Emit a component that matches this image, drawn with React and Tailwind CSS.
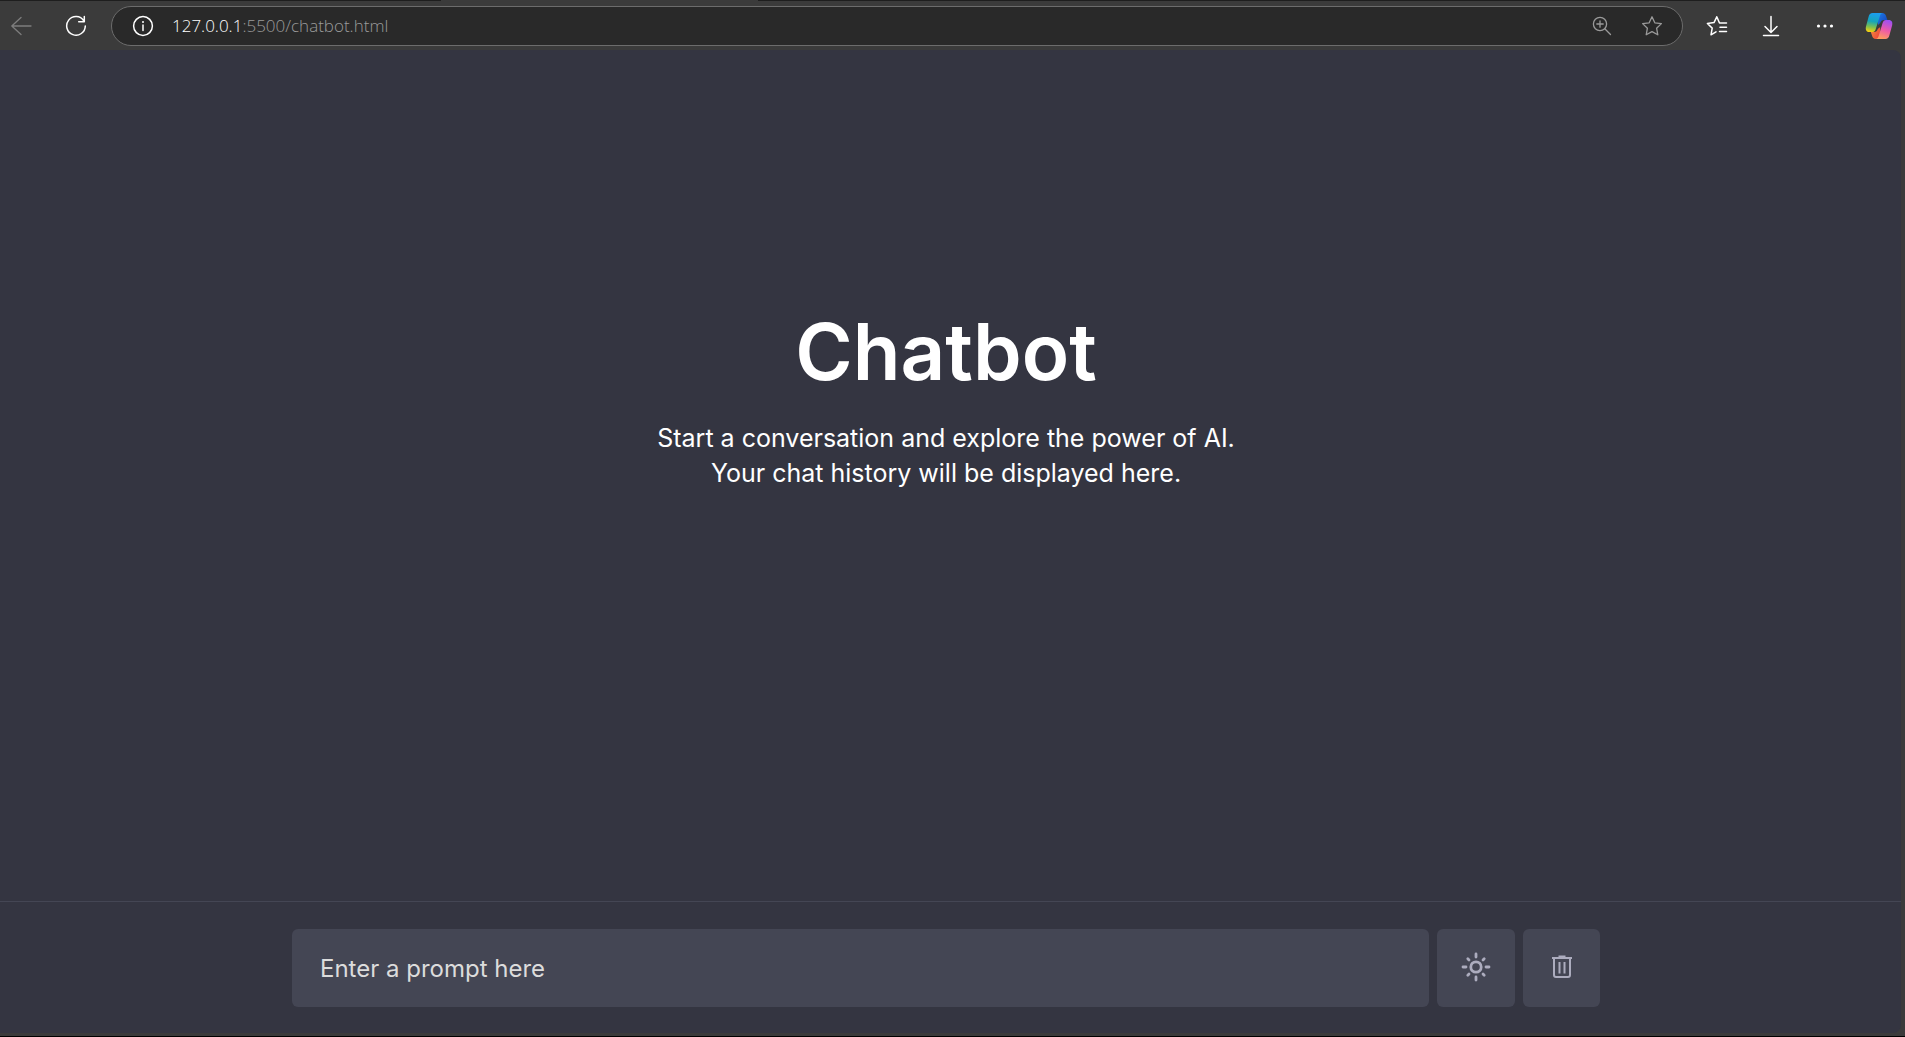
const iconProps = {
  fill: "none",
  stroke: "currentColor",
  strokeLinecap: "round",
  strokeLinejoin: "round",
  "aria-hidden": true,
};

function BackIcon() {
  return (
    <svg {...iconProps} width="22" height="20" viewBox="0 0 22 20" strokeWidth="1.3">
      <path d="M20 10H.8M10 1.500.8 10l9.200 8.500" />
    </svg>
  );
}

function ReloadIcon() {
  return (
    <svg {...iconProps} width="22" height="22" viewBox="0 0 22 22" strokeWidth="1.5">
      <path d="M18.8 5.8A9.3 9.3 0 1 0 20.3 11M19.3 1.5v5.3h-5.6" />
    </svg>
  );
}

function InfoIcon() {
  return (
    <svg {...iconProps} width="22" height="22" viewBox="0 0 22 22" strokeWidth="1.5">
      <circle cx="11" cy="11" r="9.4" />
      <path d="M11 10v5.5" />
      <circle cx="11" cy="7" r="1" fill="currentColor" stroke="none" />
    </svg>
  );
}

function ZoomInIcon() {
  return (
    <svg {...iconProps} width="20" height="20" viewBox="0 0 20 20" strokeWidth="1.3">
      <circle cx="8" cy="8" r="6.6" />
      <path d="M12.8 12.8 18.5 18.5M8 4.8v6.4M4.8 8h6.4" />
    </svg>
  );
}

function StarIcon() {
  return (
    <svg {...iconProps} width="22" height="22" viewBox="0 0 22 22" strokeWidth="1.3">
      <path d="m11 1.8 2.8 6 6.6.8-4.8 4.6 1.2 6.6L11 16.6l-5.8 3.2 1.2-6.6-4.8-4.6 6.6-.8z" />
    </svg>
  );
}

function FavoritesIcon() {
  return (
    <svg {...iconProps} width="22" height="22" viewBox="0 0 22 22" strokeWidth="1.5">
      <path d="M20.500 8H13.500L10.800 1.800 8 7.600l-6.600.9 4.800 4.600L5 19.800l5-2.900M14 12.200h6.500M13.500 16.400h7" />
    </svg>
  );
}

function DownloadIcon() {
  return (
    <svg {...iconProps} width="18" height="22" viewBox="0 0 18 22" strokeWidth="1.5">
      <path d="M9 1.500v15.500M3 11.500l6 6 6-6M1.500 20.500h15" />
    </svg>
  );
}

function MoreIcon() {
  return (
    <svg width="18" height="6" viewBox="0 0 18 6" fill="currentColor" aria-hidden="true">
      <circle cx="2.500" cy="3" r="1.600" />
      <circle cx="9" cy="3" r="1.600" />
      <circle cx="15.500" cy="3" r="1.600" />
    </svg>
  );
}

function CopilotIcon() {
  return (
    <svg width="28" height="28" viewBox="0 0 28 28" aria-hidden="true">
      <defs>
        <linearGradient id="cool" x1="0.5" y1="0" x2="0.35" y2="1">
          <stop offset="0" stopColor="#1b9df0" />
          <stop offset="0.45" stopColor="#16a5b8" />
          <stop offset="0.75" stopColor="#7fc04f" />
          <stop offset="1" stopColor="#f5d010" />
        </linearGradient>
        <linearGradient id="warm" x1="0.6" y1="0" x2="0.3" y2="1">
          <stop offset="0" stopColor="#a050f0" />
          <stop offset="0.5" stopColor="#ee5aa8" />
          <stop offset="1" stopColor="#ffa05a" />
        </linearGradient>
        <linearGradient id="fold" x1="0" y1="0" x2="1" y2="1">
          <stop offset="0" stopColor="#1d7be8" />
          <stop offset="1" stopColor="#1540b8" />
        </linearGradient>
        <linearGradient id="ember" x1="0" y1="0" x2="1" y2="0.6">
          <stop offset="0" stopColor="#f5903a" />
          <stop offset="1" stopColor="#ee4a3c" />
        </linearGradient>
      </defs>
      <path d="M13 1h4c2.5 0 3.6 1.3 4.2 3.4L22.4 8H19c-2.2 0-3.2 1.2-3.8 3L13 13z" fill="url(#fold)" />
      <path d="M15 27h-4c-2.5 0-3.4-1.3-4-3.4L5.8 20H9c2.2 0 3.2-1.2 3.8-3l2.4-2z" fill="url(#ember)" />
      <path d="M7.5 1H18c-2 0-2.7 1.4-3.3 3.4l-4.1 13C10 19.2 8.8 20 7 20H4.5C1.4 20 .2 17.8 1 14.4L3.6 4.8C4.3 2.2 5.4 1 7.5 1z" fill="url(#cool)" />
      <path d="M20.5 27H10.5c2 0 2.7-1.4 3.3-3.4l3.8-12.7C18.2 9 19.3 8 21 8h2.7c3.1 0 4.2 2.2 3.4 5.6l-2.7 9.6c-.7 2.6-1.8 3.8-3.9 3.8z" fill="url(#warm)" />
    </svg>
  );
}

function SunIcon() {
  return (
    <svg {...iconProps} width="30" height="30" viewBox="0 0 30 30" strokeWidth="2.8">
      <circle cx="15" cy="15" r="5.2" />
      <path d="M15 2v3M15 25v3M2 15h3M25 15h3M6.800 6.800l1.200 1.200M22 22l1.200 1.200M6.800 23.200 8 22M22 8l1.200-1.200" />
    </svg>
  );
}

function TrashIcon() {
  return (
    <svg width="30" height="30" viewBox="0 0 30 30" fill="none" stroke="currentColor" strokeWidth="2" aria-hidden="true">
      <path d="M5 6h20M11.500 4.500h7" />
      <path d="M7 6v17q0 2 2 2h12q2 0 2-2V6M12.500 10v11.500M17.500 10v11.500" />
    </svg>
  );
}

const toolButton = "flex h-9 w-9 shrink-0 items-center justify-center rounded-md";
const composerButton =
  "flex h-[78px] shrink-0 items-center justify-center rounded-md bg-[#444654] pb-0.5 text-[#acacbe]";

function BrowserToolbar() {
  return (
    <header className="font-['Open_Sans','Noto_Sans',sans-serif]">
      <div className="flex h-px bg-[#1e1e1e]">
        <div className="ml-[441px] w-[317px] bg-[#3b3b3b]" />
      </div>
      <div className="flex h-[49px] items-center pt-px pr-2 pl-1 text-white">
        <button aria-label="Back" className={`${toolButton} text-[#7d7d7d]`}>
          <BackIcon />
        </button>
        <button aria-label="Reload" className={`${toolButton} ml-[18px]`}>
          <ReloadIcon />
        </button>
        <div className="ml-[17px] flex h-10 min-w-0 flex-1 items-center rounded-full border border-[#6c6c6c] bg-[#292929] pr-3 pl-[13px]">
          <button aria-label="Site information" className={toolButton}>
            <InfoIcon />
          </button>
          <a href="#" className="ml-[11px] flex-1 text-[17px] leading-6 font-light text-[#9a9a9a]">
            <span className="text-white">127.0.0.1</span>:5500/chatbot.html
          </a>
          <button aria-label="Zoom" className={`${toolButton} text-[#9a9a9a]`}>
            <ZoomInIcon />
          </button>
          <button aria-label="Add to favorites" className={`${toolButton} ml-[14px] text-[#9a9a9a]`}>
            <StarIcon />
          </button>
        </div>
        <div className="ml-4 flex items-center gap-[18px]">
          <button aria-label="Favorites" className={toolButton}>
            <FavoritesIcon />
          </button>
          <button aria-label="Downloads" className={toolButton}>
            <DownloadIcon />
          </button>
          <button aria-label="Settings and more" className={toolButton}>
            <MoreIcon />
          </button>
          <button aria-label="Copilot" className={toolButton}>
            <CopilotIcon />
          </button>
        </div>
      </div>
    </header>
  );
}

export default function App() {
  return (
    <div className="flex min-h-screen flex-col border-b border-black bg-[#3b3b3b]">
      <BrowserToolbar />
      <div className="mr-1 mb-[3px] flex flex-1 flex-col overflow-hidden rounded-r-lg bg-[#343541] font-['Inter','Open_Sans',sans-serif]">
        <main className="flex flex-1 flex-col items-center justify-center pr-[9px] pb-[166px] text-center text-white">
          <h1 className="text-[78px] leading-[114px] font-semibold">Chatbot</h1>
          <p className="mt-3 text-[25px] leading-[35px]">
            Start a conversation and explore the power of AI.
            <br />
            Your chat history will be displayed here.
          </p>
        </main>
        <form className="flex justify-center border-t border-[#444654] pt-[27px] pr-[9px] pb-[26px]">
          <div className="flex w-full max-w-[1308px] gap-2">
            <input
              type="text"
              aria-label="Prompt"
              placeholder="Enter a prompt here"
              className="h-[78px] min-w-0 flex-1 rounded-md bg-[#444654] px-7 text-2xl text-white placeholder:text-[#dcdcdc]"
            />
            <button type="button" aria-label="Toggle theme" className={`${composerButton} w-[78px]`}>
              <SunIcon />
            </button>
            <button type="button" aria-label="Delete chat" className={`${composerButton} w-[77px]`}>
              <TrashIcon />
            </button>
          </div>
        </form>
      </div>
    </div>
  );
}
